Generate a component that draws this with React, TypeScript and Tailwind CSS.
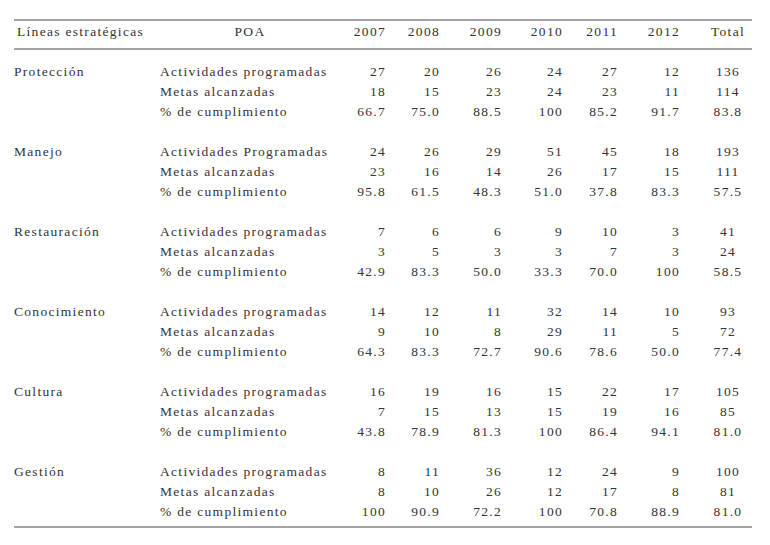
import React from "react";

type Fila = { poa: string; valores: string[] };
type Grupo = { linea: string; filas: Fila[] };

const years = ["2007", "2008", "2009", "2010", "2011", "2012"];

const grupos: Grupo[] = [
  {
    linea: "Protección",
    filas: [
      { poa: "Actividades programadas", valores: ["27", "20", "26", "24", "27", "12", "136"] },
      { poa: "Metas alcanzadas", valores: ["18", "15", "23", "24", "23", "11", "114"] },
      { poa: "% de cumplimiento", valores: ["66.7", "75.0", "88.5", "100", "85.2", "91.7", "83.8"] },
    ],
  },
  {
    linea: "Manejo",
    filas: [
      { poa: "Actividades Programadas", valores: ["24", "26", "29", "51", "45", "18", "193"] },
      { poa: "Metas alcanzadas", valores: ["23", "16", "14", "26", "17", "15", "111"] },
      { poa: "% de cumplimiento", valores: ["95.8", "61.5", "48.3", "51.0", "37.8", "83.3", "57.5"] },
    ],
  },
  {
    linea: "Restauración",
    filas: [
      { poa: "Actividades programadas", valores: ["7", "6", "6", "9", "10", "3", "41"] },
      { poa: "Metas alcanzadas", valores: ["3", "5", "3", "3", "7", "3", "24"] },
      { poa: "% de cumplimiento", valores: ["42.9", "83.3", "50.0", "33.3", "70.0", "100", "58.5"] },
    ],
  },
  {
    linea: "Conocimiento",
    filas: [
      { poa: "Actividades programadas", valores: ["14", "12", "11", "32", "14", "10", "93"] },
      { poa: "Metas alcanzadas", valores: ["9", "10", "8", "29", "11", "5", "72"] },
      { poa: "% de cumplimiento", valores: ["64.3", "83.3", "72.7", "90.6", "78.6", "50.0", "77.4"] },
    ],
  },
  {
    linea: "Cultura",
    filas: [
      { poa: "Actividades programadas", valores: ["16", "19", "16", "15", "22", "17", "105"] },
      { poa: "Metas alcanzadas", valores: ["7", "15", "13", "15", "19", "16", "85"] },
      { poa: "% de cumplimiento", valores: ["43.8", "78.9", "81.3", "100", "86.4", "94.1", "81.0"] },
    ],
  },
  {
    linea: "Gestión",
    filas: [
      { poa: "Actividades programadas", valores: ["8", "11", "36", "12", "24", "9", "100"] },
      { poa: "Metas alcanzadas", valores: ["8", "10", "26", "12", "17", "8", "81"] },
      { poa: "% de cumplimiento", valores: ["100", "90.9", "72.2", "100", "70.8", "88.9", "81.0"] },
    ],
  },
];

export default function App() {
  return (
    <div className="w-[770px] h-[545px] bg-white pt-[19px] pl-[14px] text-[#333] text-[13.5px] leading-[16px] tracking-[1.3px] font-['Liberation_Serif',serif]">
      <table className="w-[738px] table-fixed border-collapse">
        <colgroup>
          <col className="w-[144px]" />
          <col className="w-[184px]" />
          <col className="w-[45px]" />
          <col className="w-[54px]" />
          <col className="w-[62px]" />
          <col className="w-[61px]" />
          <col className="w-[55px]" />
          <col className="w-[62px]" />
          <col className="w-[71px]" />
        </colgroup>
        <thead>
          <tr className="h-[29px] border-t-2 border-b-2 border-[#a3a3a3]">
            <th className="p-0 pb-[5px] pl-[3px] text-left font-normal">Líneas estratégicas</th>
            <th className="p-0 pb-[5px] text-center font-normal">POA</th>
            {years.map((y) => (
              <th key={y} className="p-0 pb-[5px] pr-[1px] text-right font-normal">
                {y}
              </th>
            ))}
            <th className="p-0 pb-[5px] pl-[23px] text-center font-normal">Total</th>
          </tr>
        </thead>
        <tbody>
          <tr className="h-[13px]">
            <td colSpan={9} className="p-0" />
          </tr>
          {grupos.map((g, gi) => (
            <React.Fragment key={g.linea}>
              {g.filas.map((f, fi) => (
                <tr key={f.poa + fi} className="h-[20px]">
                  <td className="p-0">{fi === 0 ? g.linea : ""}</td>
                  <td className="p-0 pl-[2px] whitespace-nowrap">{f.poa}</td>
                  {f.valores.slice(0, 6).map((v, vi) => (
                    <td key={vi} className="p-0 pr-[1px] text-right">
                      {v}
                    </td>
                  ))}
                  <td className="p-0 pl-[23px] text-center">{f.valores[6]}</td>
                </tr>
              ))}
              {gi < grupos.length - 1 ? (
                <tr className="h-[20px]">
                  <td colSpan={9} className="p-0" />
                </tr>
              ) : (
                <tr className="h-[5px] border-b-2 border-[#a3a3a3]">
                  <td colSpan={9} className="p-0" />
                </tr>
              )}
            </React.Fragment>
          ))}
        </tbody>
      </table>
    </div>
  );
}
